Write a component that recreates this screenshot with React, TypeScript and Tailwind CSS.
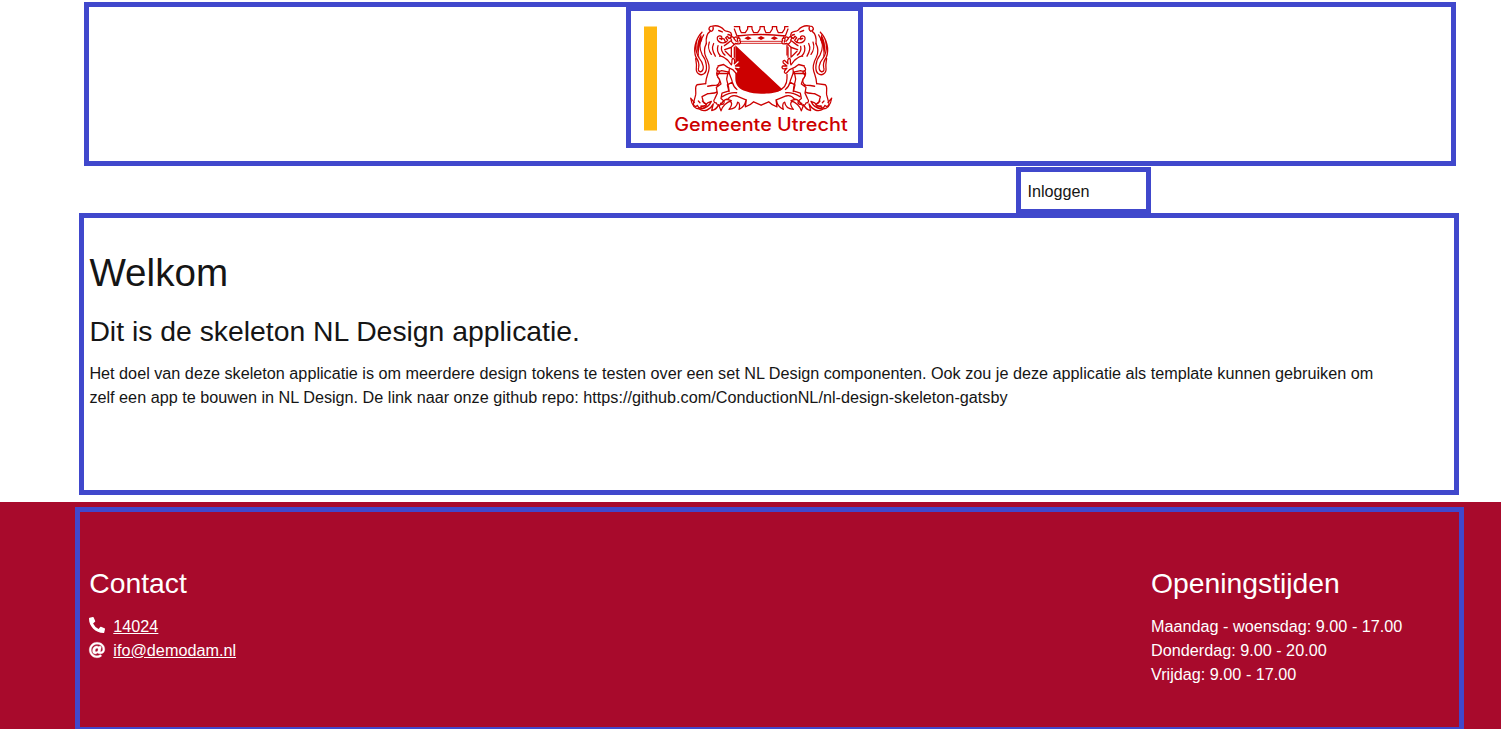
import { FaAt, FaPhoneAlt } from "react-icons/fa";

function Lion() {
  return (
    <g transform="translate(0 -1) scale(1 1.085)">
      <path d="M64 66C62 50 66 38 77 31C68 27 72 18 82 18C98 14 110 21 118 29C124 34 132 31 138 37C142 44 139 51 132 52L127 46L122 50L128 57C122 66 108 66 101 60C94 54 96 46 103 45C110 44 113 50 109 55" />
      <path d="M101 30L112 34M84 20Q87 27 80 32M104 52L117 53L121 61M129 41L136 43" />
      <path d="M64 66C57 78 57 92 63 104C71 118 75 130 71 142C67 154 62 164 62 177M73 62C68 76 70 84 79 96M86 66C80 78 82 86 91 101M99 72C95 82 96 90 107 101M110 74C107 86 112 92 120 98" />
      <path fill="white" d="M118 72C124 69 132 62 140 57L136 50C140 44 147 49 147 53C150 45 157 47 157 52C162 48 168 54 164 58C169 61 166 67 161 67L151 66L138 77L119 83" />
      <path d="M149 55L154 60M157 55L159 62M139 60L147 68" />
      <path fill="white" d="M104 101C112 99 121 107 128 112L139 125C143 120 138 111 143 107C149 106 150 115 148 122L158 113C164 112 165 119 159 122L151 128L163 128C169 131 165 137 159 136L151 134L158 141C161 147 155 151 151 146L143 138L128 132L116 124L99 128" />
      <path d="M148 76V104M139 77V104M121 87L136 101M99 131C90 140 99 145 110 141L132 145L133 137M96 144C94 151 99 160 103 164C106 172 101 179 96 181L81 182L68 184" />
      <path d="M51 35C29 53 28 86 43 107C56 121 59 139 48 144C41 145 38 139 41 132C44 119 39 112 33 104C24 83 30 56 51 35M56 42C40 66 43 82 52 98C65 112 69 140 58 149C47 157 32 149 34 134C36 124 33 116 32 108" />
      <path fill="#cc0000" stroke="none" d="M48 40C34 62 33 86 43 105C39 89 43 72 52 55Z" />
      <path d="M62 177L36 180C28 186 34 195 32 208L25 232C25 239 32 243 37 237C42 247 49 246 50 239C57 244 65 242 64 234L55 227L51 213L67 205C79 204 91 204 97 199C106 193 103 180 96 181M40 225L45 230M52 225L58 231" />
      <path fill="white" d="M103 146L97 154C99 162 103 164 103 164L108 178L94 187L97 203L89 219C84 224 87 231 94 230C97 240 106 240 107 231C114 238 121 231 116 224L108 218L111 203L132 197C132 184 126 173 125 164L129 146" />
      <path d="M96 149L132 148M132 145C135 158 141 164 142 173L127 180L132 199M142 173C145 183 151 190 156 193" />
      <path d="M17 217C21 239 29 248 46 247C60 246 72 241 79 226L68 230C61 239 54 240 47 239M17 217L28 229M42 247C58 257 76 249 85 233L80 251C91 250 97 243 101 235L108 252C112 241 121 230 139 224L125 220C116 222 111 229 108 235M135 225C144 230 139 240 132 248C149 247 156 240 158 228C166 230 164 242 162 248C173 244 181 234 183 222L154 211C144 208 134 213 128 220M184 222L181 241C193 238 201 232 206 227L228 236M112 213C124 206 136 200 155 202" />
    </g>
  );
}

function MunicipalityLogo() {
  return (
    <svg width="227" height="132" viewBox="631 11 227 132" role="img" aria-label="Gemeente Utrecht">
      <rect x="644" y="26.5" width="13" height="104" fill="#ffb70f" />
      <g transform="translate(685 20) scale(.33333)" fill="none" stroke="#cc0000" strokeWidth="3.8" strokeLinejoin="round" strokeLinecap="round">
        <path d="M151 76L292 208C278 219 255 221 238 221C222 221 202 222 183 214C163 208 151 195 151 176Z" fill="#cc0000" stroke="none" />
        <path d="M166 64H291M166 70H291" strokeWidth="2.5" />
        <path d="M306 76V105M306 163V175C306 193 297 207 278 213" />
        <path d="M148 27L156 48Q228 39 301 48L309 27M148 20H164V27L169 38H181L188 27V20H201V27L206 38H218L225 27V20H238V27L243 38H255L262 27V20H275V27L280 38H292L299 27V20H309M160 47L163 60M297 47L294 60" />
        <path d="M178 55L189 49L200 55L189 60ZM217 54L228 48L240 54L228 60ZM257 55L268 49L279 55L268 60Z" fill="#cc0000" stroke="none" />
        <Lion />
        <g transform="translate(457 0) scale(-1 1)">
          <Lion />
        </g>
      </g>
      <text x="674.2" y="130.5" textLength="173.5" lengthAdjust="spacingAndGlyphs" fill="#cc0000" className="font-['Inter',sans-serif] text-[18.3px] font-medium">
        Gemeente Utrecht
      </text>
    </svg>
  );
}

export default function App() {
  return (
    <div className="flex h-[729px] w-[1501px] flex-col overflow-hidden bg-white font-['Liberation_Sans',Arial,sans-serif] text-[16.22px] leading-[24.4px] text-[#151515]">
      <header className="mt-[2px] ml-[84px] flex h-[164px] w-[1372px] shrink-0 items-start justify-center border-[5px] border-[#4048cc]">
        <a className="-mt-px mr-[51px] block h-[142px] w-[237px] border-[5px] border-[#4048cc]">
          <MunicipalityLogo />
        </a>
      </header>
      <nav className="mt-px ml-[1016px] flex h-[47px] w-[135px] shrink-0 items-center border-[5px] border-[#4048cc] pl-[6.4px]">
        <a className="pt-px">Inloggen</a>
      </nav>
      <main className="-mt-px ml-[79px] h-[282px] w-[1380px] shrink-0 border-[5px] border-[#4048cc] pt-[30px] pl-[5.4px]">
        <h1 className="text-[38.6px] leading-[50px]">Welkom</h1>
        <h2 className="mt-[16px] text-[28.35px] leading-[34px]">Dit is de skeleton NL Design applicatie.</h2>
        <p className="mt-[13px] whitespace-nowrap">
          Het doel van deze skeleton applicatie is om meerdere design tokens te testen over een set NL Design componenten. Ook zou je deze applicatie als template kunnen gebruiken om
          <br />
          zelf een app te bouwen in NL Design. De link naar onze github repo: https://github.com/ConductionNL/nl-design-skeleton-gatsby
        </p>
      </main>
      <footer className="mt-[7px] h-[227px] shrink-0 bg-[#a80a2c] pt-[5px] text-white">
        <div className="ml-[75px] flex h-[225px] w-[1389px] justify-between border-[5px] border-[#4048cc] pt-[54px] pr-[57px] pl-[9.3px]">
          <section>
            <h2 className="text-[28.3px] leading-[34px]">Contact</h2>
            <ul className="mt-[13.6px]">
              <li className="flex items-center gap-[8px]">
                <FaPhoneAlt size={16} className="-mt-px" />
                <a className="underline">14024</a>
              </li>
              <li className="flex items-center gap-[8px]">
                <FaAt size={16} className="-mt-px overflow-visible stroke-white" strokeWidth={10} />
                <a className="underline">ifo@demodam.nl</a>
              </li>
            </ul>
          </section>
          <section className="w-[251px] whitespace-nowrap">
            <h2 className="text-[28.3px] leading-[34px]">Openingstijden</h2>
            <p className="mt-[13.6px]">
              Maandag - woensdag: 9.00 - 17.00
              <br />
              Donderdag: 9.00 - 20.00
              <br />
              Vrijdag: 9.00 - 17.00
            </p>
          </section>
        </div>
      </footer>
    </div>
  );
}
